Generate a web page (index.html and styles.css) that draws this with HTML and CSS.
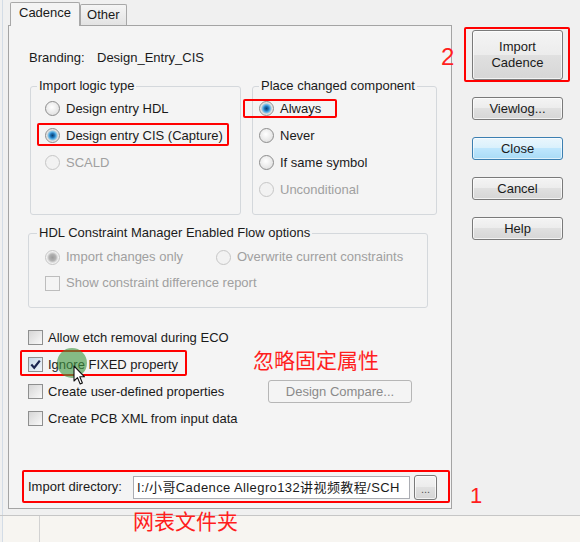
FILE: index.html
```html
<!DOCTYPE html>
<html lang="zh">
<head>
    <meta charset="UTF-8">
    <title>Import Cadence</title>
    <link rel="stylesheet" href="styles.css">
</head>
<body>
    <div class="window">
        <div class="main">
            <div class="left">
                <div class="tabs">
                    <div class="tab active">Cadence</div>
                    <div class="tab">Other</div>
                </div>

                <div class="panel">
                    <div class="branding">
                        <span class="branding-label">Branding:</span>
                        <span>Design_Entry_CIS</span>
                    </div>

                    <div class="groups">
                        <fieldset class="group group-logic">
                            <legend>Import logic type</legend>
                            <label class="opt"><span class="radio"></span>Design entry HDL</label>
                            <label class="opt"><span class="radio on"></span>Design entry CIS (Capture)</label>
                            <label class="opt off"><span class="radio disabled"></span>SCALD</label>
                        </fieldset>

                        <fieldset class="group group-place">
                            <legend>Place changed component</legend>
                            <label class="opt"><span class="radio on"></span>Always</label>
                            <label class="opt"><span class="radio"></span>Never</label>
                            <label class="opt"><span class="radio"></span>If same symbol</label>
                            <label class="opt off"><span class="radio disabled"></span>Unconditional</label>
                        </fieldset>
                    </div>

                    <fieldset class="group group-hdl">
                        <legend>HDL Constraint Manager Enabled Flow options</legend>
                        <div class="hdl-row">
                            <label class="opt off"><span class="radio disabled on"></span>Import changes only</label>
                            <label class="opt off"><span class="radio disabled"></span>Overwrite current constraints</label>
                        </div>
                        <div class="hdl-row">
                            <label class="opt off"><span class="box disabled"></span>Show constraint difference report</label>
                        </div>
                    </fieldset>

                    <div class="checks">
                        <div class="check-row">
                            <label class="opt"><span class="box"></span>Allow etch removal during ECO</label>
                        </div>
                        <div class="check-row">
                            <label class="opt">
                                <span class="box on">
                                    <svg width="11" height="11" viewBox="0 0 11 11"><path d="M1.3 5.6 L4.2 8.7 L9.8 1.6" fill="none" stroke="#1b2550" stroke-width="2.2"/></svg>
                                </span>Ignore FIXED property
                            </label>
                        </div>
                        <div class="check-row">
                            <label class="opt"><span class="box"></span>Create user-defined properties</label>
                            <button class="btn compare" disabled>Design Compare...</button>
                        </div>
                        <div class="check-row">
                            <label class="opt"><span class="box"></span>Create PCB XML from input data</label>
                        </div>
                    </div>

                    <div class="import-row">
                        <span class="import-label">Import directory:</span>
                        <div class="dir-input">I:/小哥Cadence Allegro132讲视频教程/SCH</div>
                        <button class="btn browse">...</button>
                    </div>
                </div>
            </div>

            <div class="side">
                <button class="btn btn-import">Import<br>Cadence</button>
                <button class="btn">Viewlog...</button>
                <button class="btn btn-default">Close</button>
                <button class="btn">Cancel</button>
                <button class="btn">Help</button>
            </div>
        </div>

        <div class="status">
            <div class="status-cell"></div>
        </div>

        <!-- annotations drawn over the dialog -->
        <div class="mark mark-import"></div>
        <div class="mark mark-always"></div>
        <div class="mark mark-cis"></div>
        <div class="mark mark-ignore"></div>
        <div class="mark mark-dir"></div>
        <div class="note note-2">2</div>
        <div class="note note-1">1</div>
        <div class="note note-cn note-ignore">忽略固定属性</div>
        <div class="note note-cn note-dir">网表文件夹</div>
        <div class="click"></div>
        <svg class="cursor" width="13" height="21" viewBox="0 0 13 21">
            <path d="M1 1 L1 16 L4.5 12.6 L7.2 19 L9.4 18 L6.8 11.8 L11.5 11.8 Z" fill="#fff" stroke="#111" stroke-width="1.1" stroke-linejoin="round"/>
        </svg>
    </div>
</body>
</html>
```

FILE: styles.css
```css
* {
    margin: 0;
    padding: 0;
    box-sizing: border-box;
}

body {
    width: 580px;
    height: 542px;
    overflow: hidden;
    font-family: "Liberation Sans", "Noto Sans CJK SC", sans-serif;
    font-size: 13px;
    line-height: 16px;
    color: #1a1a1a;
    background: #f0f0f0;
}

.window {
    position: relative;
    width: 580px;
    height: 542px;
    display: flex;
    flex-direction: column;
    background: linear-gradient(to right, #f0f0f0 2px, #d3dce6 2px, #d3dce6 3px, #f0f0f0 3px);
}

.main {
    display: flex;
    height: 516px;
    padding-left: 8px;
    border-bottom: 1px solid #c6c6c6;
}

.left {
    width: 444px;
}

/* Tabs */
.tabs {
    display: flex;
    align-items: flex-end;
    height: 25px;
    padding-left: 2px;
}

.tab {
    height: 21px;
    padding: 0 6px;
    line-height: 20px;
    border: 1px solid #a8a8a8;
    border-bottom: none;
    border-radius: 2px 2px 0 0;
    background: linear-gradient(#f5f5f5, #e3e3e3);
}

.tab.active {
    position: relative;
    z-index: 1;
    height: 24px;
    margin-bottom: -1px;
    padding: 0 8px;
    background: #f4f4f4;
}

.panel {
    height: 484px;
    display: flex;
    flex-direction: column;
    padding: 0 14px 8px 19px;
    border: 1px solid #a4a4a4;
    background: #f4f4f4;
}

.branding {
    display: flex;
    margin-top: 24px;
    padding-left: 1px;
}

.branding-label {
    width: 68px;
}

/* Group boxes */
.groups {
    display: flex;
    gap: 11px;
    margin-top: 12px;
    padding-left: 2px;
}

.group {
    min-width: 0;
    margin: 0;
    border: 1px solid #d4d8dc;
    border-radius: 3px;
}

.group legend {
    padding: 0 2px;
    line-height: 16px;
}

.group-logic {
    width: 211px;
    padding: 1px 0 0 6px;
}

.group-logic .opt {
    margin-left: 8px;
}

.group-place {
    width: 185px;
    padding: 1px 0 11px 6px;
}

.group-hdl {
    width: 400px;
    margin-top: 10px;
    padding: 3px 0 11px 8px;
}

.opt {
    display: flex;
    align-items: center;
    gap: 6px;
    height: 27px;
    white-space: nowrap;
}

.opt.off {
    color: #a0a0a0;
}

.hdl-row {
    display: flex;
    height: 26px;
    margin-left: 8px;
}

.hdl-row .opt {
    height: 26px;
}

.hdl-row .opt:first-child {
    width: 171px;
}

/* Radio and check marks */
.radio {
    flex: none;
    width: 15px;
    height: 15px;
    border: 1px solid #8d8d8d;
    border-radius: 50%;
    background: radial-gradient(circle at 45% 40%, #ffffff, #e4e4e4 70%, #d0d0d0);
}

.radio.on {
    background: radial-gradient(circle, #0b3f6c 0, #1c6fb3 2px, #56afe6 3.6px, #9cc8df 4.6px, #dcdcdc 5.4px, #f3f3f3 7px);
}

.radio.disabled {
    border-color: #c6c6c6;
    background: #f2f2f2;
}

.radio.disabled.on {
    background: radial-gradient(circle, #9c9c9c 0, #b2b2b2 3.4px, #d8d8d8 4.8px, #f2f2f2 6px);
}

.box {
    flex: none;
    display: flex;
    align-items: center;
    justify-content: center;
    width: 15px;
    height: 15px;
    border: 1px solid #8e8f8f;
    background: linear-gradient(135deg, #d6d6d6, #f9f9f9);
}

.box.on {
    background: linear-gradient(135deg, #c5d8e8, #f1f6fb);
}

.box.disabled {
    border-color: #bdbdbd;
    background: #f4f4f4;
}

.checks {
    margin-top: 16px;
}

.check-row {
    display: flex;
    align-items: center;
    height: 27px;
}

.check-row .opt {
    width: 240px;
    gap: 5px;
}

/* Buttons */
.btn {
    width: 91px;
    height: 23px;
    font: inherit;
    color: #1a1a1a;
    border: 1px solid #7a7a7a;
    border-radius: 3px;
    background: linear-gradient(#f4f4f4 0%, #ececec 49%, #e0e0e0 50%, #d6d6d6 100%);
    box-shadow: inset 0 0 0 1px rgba(255, 255, 255, 0.7);
}

.btn-import {
    height: 50px;
}

.btn-default {
    border-color: #3c7fb1;
    background: linear-gradient(#eaf6fd 0%, #d9f0fc 49%, #bee6fd 50%, #a9dbf6 100%);
    box-shadow: inset 0 0 0 1px rgba(255, 255, 255, 0.6);
}

.btn.compare {
    width: 144px;
    color: #8a8a8a;
    border-color: #b6b6b6;
    background: #f4f4f4;
    box-shadow: none;
}

.btn.browse {
    width: 23px;
    height: 25px;
    font-size: 11px;
    line-height: 14px;
    padding-top: 4px;
    color: #555;
}

.side {
    display: flex;
    flex-direction: column;
    gap: 17px;
    margin-left: 20px;
    padding-top: 30px;
}

/* Import directory */
.import-row {
    display: flex;
    align-items: center;
    height: 26px;
    margin-top: auto;
}

.import-label {
    width: 105px;
}

.dir-input {
    width: 277px;
    height: 23px;
    margin-right: 4px;
    padding-left: 3px;
    line-height: 21px;
    letter-spacing: 0.4px;
    white-space: nowrap;
    overflow: hidden;
    border: 1px solid #abadb3;
    background: #fff;
}

.status {
    display: flex;
    height: 26px;
    margin-left: 3px;
    background: #f7f5f1;
}

.status-cell {
    width: 37px;
    border-right: 1px solid #d2d2d2;
}

/* Annotations */
.mark {
    position: absolute;
    border: 2px solid #ff0000;
    border-radius: 2px;
}

.mark-import { left: 464px; top: 27px; width: 106px; height: 55px; }
.mark-always { left: 243px; top: 99px; width: 94px; height: 19px; }
.mark-cis { left: 37px; top: 123px; width: 192px; height: 23px; }
.mark-ignore { left: 20px; top: 350px; width: 167px; height: 26px; }
.mark-dir { left: 22px; top: 470px; width: 428px; height: 33px; }

.note {
    position: absolute;
    color: #ff1e1e;
    font-family: "Liberation Sans", sans-serif;
    white-space: nowrap;
}

.note-2 {
    left: 441px;
    top: 45px;
    font-size: 24px;
    line-height: 24px;
}

.note-1 {
    left: 470px;
    top: 485px;
    font-size: 22px;
    line-height: 22px;
}

.note-cn {
    font-family: "Noto Sans CJK SC", sans-serif;
    font-size: 21px;
    line-height: 21px;
}

.note-ignore { left: 253px; top: 349px; }
.note-dir { left: 133px; top: 510px; }

.click {
    position: absolute;
    left: 57px;
    top: 348px;
    width: 30px;
    height: 30px;
    border-radius: 50%;
    background: rgba(64, 150, 64, 0.62);
}

.cursor {
    position: absolute;
    left: 73px;
    top: 365px;
}
```
